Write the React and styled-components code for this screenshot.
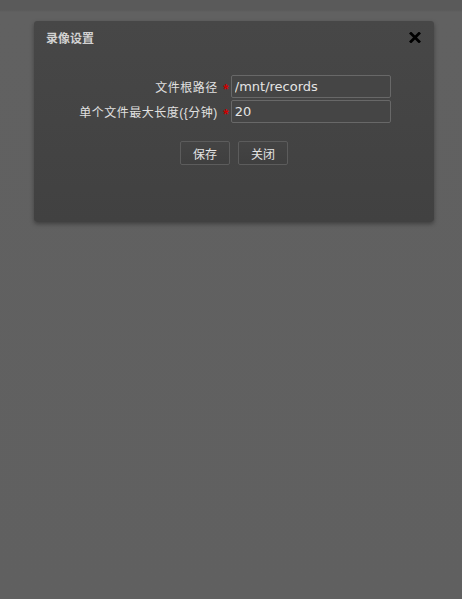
import React from "react";
import styled, { createGlobalStyle } from "styled-components";

const Global = createGlobalStyle`
  html, body {
    margin: 0;
    height: 100%;
  }
  body {
    background: linear-gradient(#5a5a5a 0, #5a5a5a 10px, #616161 12px, #606060 100%);
    font-family: "Liberation Sans", "Noto Sans CJK SC", sans-serif;
    min-height: 599px;
  }
`;

const Page = styled.div`
  padding: 21px 0 0 34px;
`;

const Dialog = styled.div`
  width: 400px;
  height: 201px;
  border-radius: 3px;
  background: linear-gradient(#474747, #414141);
  box-shadow: 0 2px 4px rgba(0, 0, 0, 0.35);
  color: #dcdcdc;
`;

const Header = styled.div`
  display: flex;
  align-items: center;
  justify-content: space-between;
  height: 32px;
  padding: 0 13px 0 12px;
  font-size: 12px;
`;

const Title = styled.span`
  font-weight: bold;
  color: #d2d2d2;
`;

const CloseIcon = () => (
  <svg width="12" height="11" viewBox="0 0 12 11">
    <path d="M2 1.5 L10 9.5 M10 1.5 L2 9.5" stroke="#000" strokeWidth="2.8" strokeLinecap="square" />
  </svg>
);

const Close = styled.span`
  display: flex;
  margin-top: 1px;
`;

const Form = styled.div`
  display: grid;
  grid-template-columns: auto 13px 160px;
  justify-content: center;
  row-gap: 2px;
  margin-top: 22px;
  padding-left: 2px;
  align-items: center;
`;

const Label = styled.label`
  font-size: 12px;
  letter-spacing: 0.5px;
  text-align: right;
  color: #e0e0e0;
`;

const Star = styled.span`
  color: #c00;
  font-size: 14px;
  font-weight: bold;
  text-align: right;
  padding-right: 2px;
  line-height: 1;
  margin-top: 4px;
`;

const Input = styled.input`
  box-sizing: border-box;
  width: 160px;
  height: 23px;
  border: 1px solid #686868;
  border-radius: 2px;
  background: #454545;
  color: #e4e4e4;
  font-family: "DejaVu Sans", sans-serif;
  font-size: 13px;
  padding: 0 3px;
  outline: none;
`;

const Actions = styled.div`
  display: flex;
  justify-content: center;
  gap: 8px;
  margin-top: 18px;
`;

const Button = styled.button`
  width: 50px;
  height: 24px;
  border: 1px solid #5c5c5c;
  border-radius: 2px;
  background: linear-gradient(#444, #3f3f3f);
  color: #e4e4e4;
  font-family: "Liberation Sans", "Noto Sans CJK SC", sans-serif;
  font-size: 12px;
  padding: 0;
`;

export default function App() {
  return (
    <>
      <Global />
      <Page>
        <Dialog>
          <Header>
            <Title>录像设置</Title>
            <Close>
              <CloseIcon />
            </Close>
          </Header>
          <Form>
            <Label>文件根路径</Label>
            <Star>*</Star>
            <Input defaultValue="/mnt/records" />
            <Label>{"单个文件最大长度({分钟)"}</Label>
            <Star>*</Star>
            <Input defaultValue="20" />
          </Form>
          <Actions>
            <Button>保存</Button>
            <Button>关闭</Button>
          </Actions>
        </Dialog>
      </Page>
    </>
  );
}
